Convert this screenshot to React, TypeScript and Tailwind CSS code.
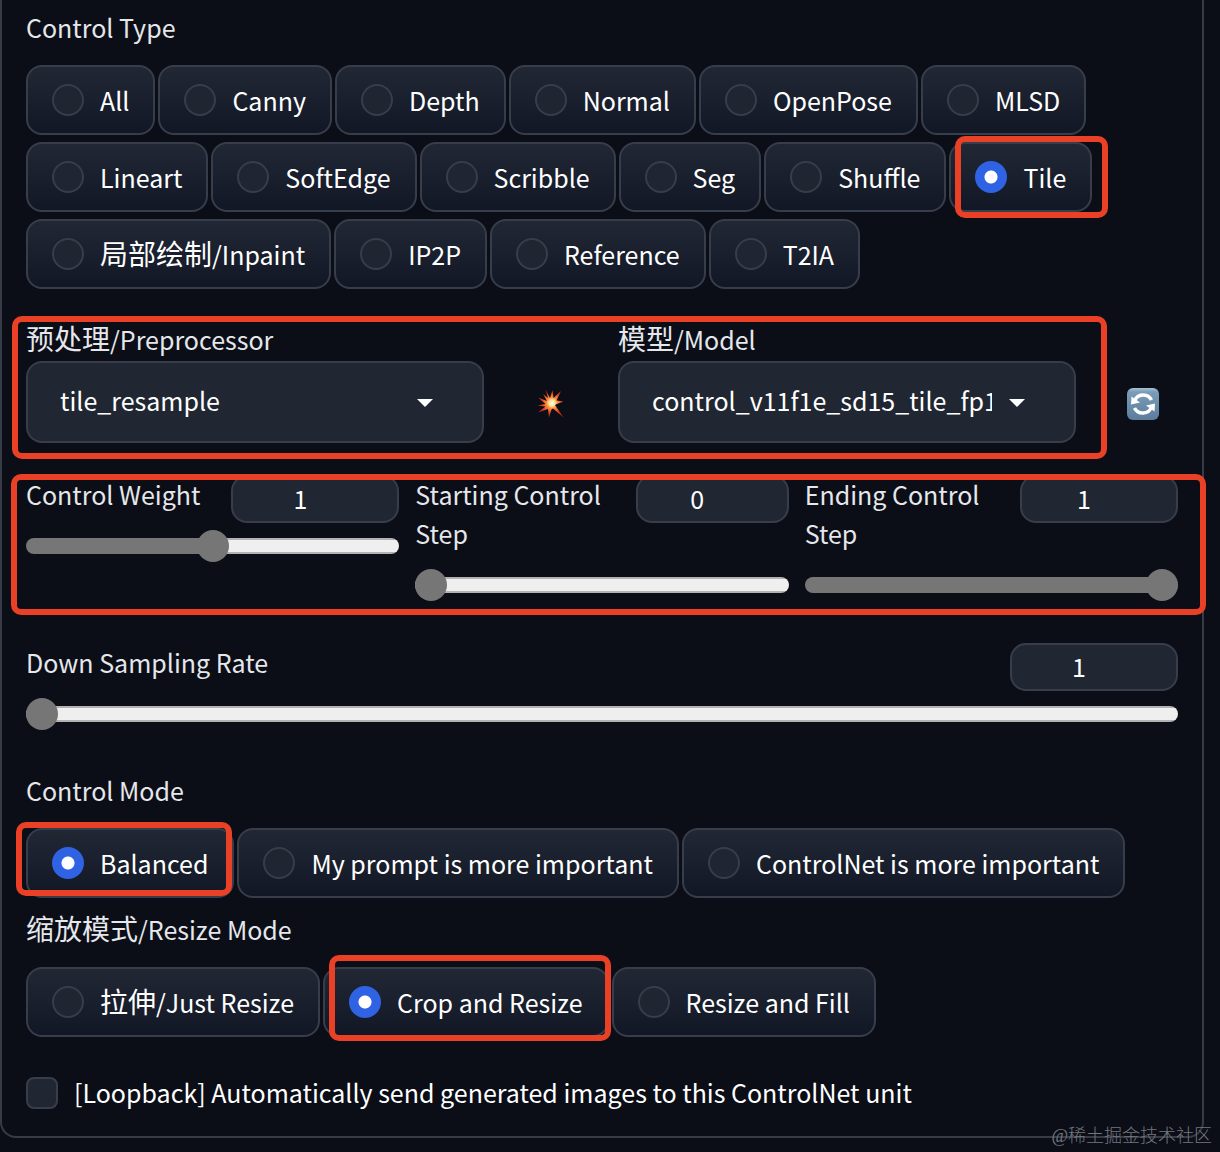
import React, { useId, useState } from 'react';

interface Option {
  value: string;
  zh?: string;
  frame?: string;
}

const controlTypes: Option[] = [
  { value: 'All' },
  { value: 'Canny' },
  { value: 'Depth' },
  { value: 'Normal' },
  { value: 'OpenPose' },
  { value: 'MLSD' },
  { value: 'Lineart' },
  { value: 'SoftEdge' },
  { value: 'Scribble' },
  { value: 'Seg' },
  { value: 'Shuffle' },
  { value: 'Tile', frame: '-top-2 -bottom-2 left-1 -right-[18px]' },
  { value: '/Inpaint', zh: '局部绘制' },
  { value: 'IP2P' },
  { value: 'Reference' },
  { value: 'T2IA' },
];

const controlModes: Option[] = [
  { value: 'Balanced', frame: '-top-2 bottom-0 -left-3 right-0' },
  { value: 'My prompt is more important' },
  { value: 'ControlNet is more important' },
];

const resizeModes: Option[] = [
  { value: '/Just Resize', zh: '拉伸' },
  { value: 'Crop and Resize', frame: '-top-[14px] -bottom-[6px] left-1 -right-1' },
  { value: 'Resize and Fill' },
];

// Red outline that marks the settings to change
function Frame({ className }: { className: string }) {
  return (
    <span
      aria-hidden="true"
      className={`absolute z-10 pointer-events-none rounded-[10px] border-6 border-[#ea4026] ${className}`}
    />
  );
}

function Caption({ zh, en }: { zh?: string; en: string }) {
  return (
    <>
      {zh && <span className="text-[28px] leading-none">{zh}</span>}
      {en}
    </>
  );
}

interface RadioGroupProps {
  zh?: string;
  label: string;
  options: Option[];
  initial: string;
}

function RadioGroup({ zh, label, options, initial }: RadioGroupProps) {
  const name = useId();
  const [selected, setSelected] = useState(initial);

  return (
    <fieldset className="min-w-0">
      <legend className="pb-[18px] text-[#e5e7eb]">
        <Caption zh={zh} en={label} />
      </legend>
      <div className="flex flex-wrap gap-x-[3px] gap-y-[7px]">
        {options.map((o) => (
          <label
            key={o.value}
            className="relative flex h-[70px] items-center gap-4 rounded-2xl border-2 border-[#373d4a] bg-linear-to-b from-[#212834] to-[#121726] px-6 text-white"
          >
            <input
              type="radio"
              name={name}
              checked={selected === o.value}
              onChange={() => setSelected(o.value)}
              className="size-8 shrink-0 appearance-none rounded-full border-2 border-[#373d4a] bg-[#1f2631] checked:border-[#3063e4] checked:bg-[radial-gradient(circle,#fff_6px,#3063e4_7px)]"
            />
            <span>
              <Caption zh={o.zh} en={o.value} />
            </span>
            {o.frame && <Frame className={o.frame} />}
          </label>
        ))}
      </div>
    </fieldset>
  );
}

function Dropdown({ zh, label, options }: { zh: string; label: string; options: string[] }) {
  const id = useId();

  return (
    <div className="min-w-0 flex-1">
      <label htmlFor={id} className="block pb-[2px] text-[#e5e7eb]">
        <Caption zh={zh} en={label} />
      </label>
      <div className="relative">
        <select
          id={id}
          className="block h-[82px] w-full appearance-none rounded-2xl border-2 border-[#373d4a] bg-[#202733] pr-[82px] pb-[3px] pl-8 text-white"
        >
          {options.map((o) => (
            <option key={o}>{o}</option>
          ))}
        </select>
        <svg
          viewBox="0 0 16 8"
          className="pointer-events-none absolute top-[38px] right-[51px] h-2 w-4 fill-white"
          aria-hidden="true"
        >
          <path d="M0 0h16L8 8z" />
        </svg>
      </div>
    </div>
  );
}

interface SliderProps {
  label: string;
  min: number;
  max: number;
  step: number;
  initial: number;
  boxWidth: string;
}

function Slider({ label, min, max, step, initial, boxWidth }: SliderProps) {
  const id = useId();
  const [value, setValue] = useState(initial);
  const fill = `${((value - min) / (max - min)) * 100}%`;

  return (
    <div className="min-w-0 flex-1">
      <div className="flex items-start justify-between gap-4">
        <label htmlFor={id} className="text-[#e5e7eb]">
          {label}
        </label>
        <input
          type="number"
          aria-label={`${label} value`}
          value={value}
          min={min}
          max={max}
          step={step}
          onChange={(e) => setValue(Number(e.target.value))}
          className={`-mb-[9px] h-12 shrink-0 rounded-2xl border-2 border-[#373d4a] bg-[#202733] pr-[30px] pb-[2px] text-center text-white [appearance:textfield] [&::-webkit-inner-spin-button]:appearance-none ${boxWidth}`}
        />
      </div>
      <input
        id={id}
        type="range"
        value={value}
        min={min}
        max={max}
        step={step}
        onChange={(e) => setValue(Number(e.target.value))}
        style={{ '--fill': fill } as React.CSSProperties}
        className="mt-4 block h-8 w-full appearance-none bg-transparent [&::-webkit-slider-runnable-track]:h-4 [&::-webkit-slider-runnable-track]:rounded-full [&::-webkit-slider-runnable-track]:[background:linear-gradient(to_right,#767676_var(--fill),transparent_var(--fill)),linear-gradient(#b2b2b2_2px,#efefef_2px_14px,#b2b2b2_14px)] [&::-webkit-slider-thumb]:-mt-2 [&::-webkit-slider-thumb]:size-8 [&::-webkit-slider-thumb]:appearance-none [&::-webkit-slider-thumb]:rounded-full [&::-webkit-slider-thumb]:bg-[#767676]"
      />
    </div>
  );
}

function BurstIcon() {
  return (
    <svg viewBox="0 0 32 32" className="size-8" aria-hidden="true">
      <defs>
        <radialGradient id="burst" gradientUnits="userSpaceOnUse" cx="17" cy="15" r="15">
          <stop offset="0" stopColor="#fffbe0" />
          <stop offset="0.2" stopColor="#ffe39a" />
          <stop offset="0.38" stopColor="#f98a3c" />
          <stop offset="0.7" stopColor="#e2401c" />
          <stop offset="1" stopColor="#c9200c" />
        </radialGradient>
      </defs>
      <path
        fill="url(#burst)"
        d="M10.500 1.500l4.500 8.500 2.500-8 1 8 7.500-7-4.500 9.500 7 1-6.500 2.500-2 1 8.500 12.500-10.500-9-1.500 1-2.500 8-1-8.500-10 3.500 7.500-6-8-1 8-1.500-7.500-6.500 9 3.500-4-7 5 4z"
      />
    </svg>
  );
}

function RefreshIcon() {
  return (
    <svg viewBox="0 0 32 32" className="size-8" aria-hidden="true">
      <defs>
        <linearGradient id="refresh" x1="0" y1="0" x2="0" y2="1">
          <stop offset="0" stopColor="#a9c3d6" />
          <stop offset="0.12" stopColor="#7b9db8" />
          <stop offset="1" stopColor="#5b7c9b" />
        </linearGradient>
      </defs>
      <rect width="32" height="32" rx="6" fill="url(#refresh)" />
      <path
        d="M7.500 13a9.300 9.300 0 0 1 17-1M24.500 19a9.300 9.300 0 0 1-17 1"
        fill="none"
        stroke="#fff"
        strokeWidth="3.500"
      />
      <path d="M4.500 8.500l-.5 8 9-2zM27.500 23.500l.5-8-9 2z" fill="#fff" />
    </svg>
  );
}

export default function App() {
  return (
    <div className="relative min-h-screen bg-[#0b0e17] pr-4 pb-4 font-['Noto_Sans_CJK_SC','Noto_Sans',sans-serif] text-[25px] leading-[39px]">
      <main className="rounded-b-2xl border-2 border-t-0 border-[#373a47] px-6 pt-2 pb-6">
        <RadioGroup label="Control Type" options={controlTypes} initial="Tile" />

        {/* Preprocessor and model */}
        <div className="relative mt-[31px] flex items-end gap-4">
          <Dropdown zh="预处理" label="/Preprocessor" options={['tile_resample', 'none']} />
          <button type="button" aria-label="Run preprocessor" className="flex h-[82px] w-[102px] shrink-0 items-center justify-center pt-1">
            <BurstIcon />
          </button>
          <Dropdown zh="模型" label="/Model" options={['control_v11f1e_sd15_tile_fp16', 'None']} />
          <button type="button" aria-label="Refresh models" className="-mr-4 flex h-[82px] w-[102px] shrink-0 items-center justify-center pt-1">
            <RefreshIcon />
          </button>
          <Frame className="-top-1 -bottom-4 -left-[14px] right-[71px]" />
        </div>

        {/* Weight and step range */}
        <div className="relative mt-8 flex gap-4">
          <Slider label="Control Weight" min={0} max={2} step={0.05} initial={1} boxWidth="w-[168px]" />
          <Slider label="Starting Control Step" min={0} max={1} step={0.01} initial={0} boxWidth="w-[153px]" />
          <Slider label="Ending Control Step" min={0} max={1} step={0.01} initial={1} boxWidth="w-[158px]" />
          <Frame className="-top-px -bottom-[14px] -left-[15px] -right-7" />
        </div>

        <div className="mt-[42px] mb-[41px] flex">
          <Slider label="Down Sampling Rate" min={1} max={8} step={0.01} initial={1} boxWidth="w-[168px]" />
        </div>

        <RadioGroup label="Control Mode" options={controlModes} initial="Balanced" />
        <div className="mt-3">
          <RadioGroup zh="缩放模式" label="/Resize Mode" options={resizeModes} initial="Crop and Resize" />
        </div>

        <label className="mt-9 flex items-center gap-4 text-white">
          <input
            type="checkbox"
            className="size-8 shrink-0 appearance-none rounded-lg border-2 border-[#373d4a] bg-[#202733] checked:bg-[#3063e4]"
          />
          [Loopback] Automatically send generated images to this ControlNet unit
        </label>
      </main>
      <span className="absolute right-2 bottom-1 font-['Liberation_Serif','Noto_Sans_CJK_SC',serif] text-lg leading-7 font-light text-[#74777e]">
        @稀土掘金技术社区
      </span>
    </div>
  );
}
